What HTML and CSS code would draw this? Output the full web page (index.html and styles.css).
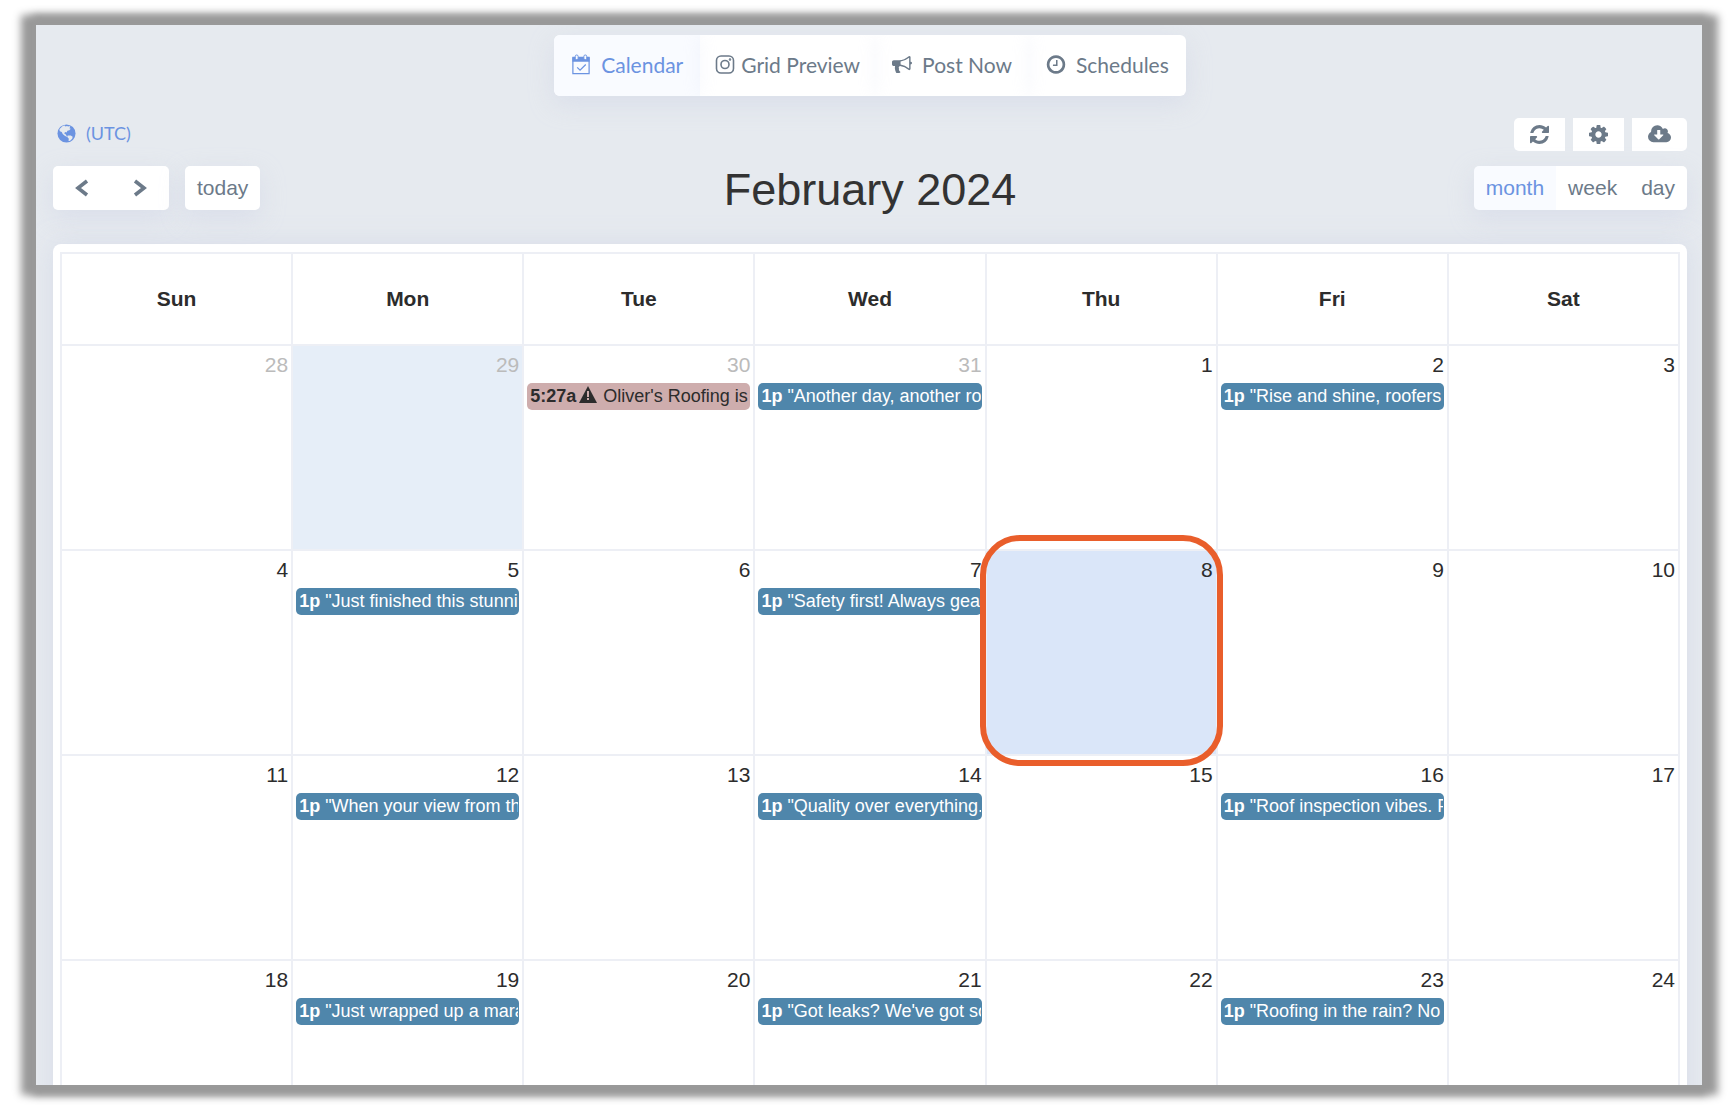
FILE: index.html
```html
<!DOCTYPE html>
<html lang="en">
<head>
  <meta charset="UTF-8">
  <meta name="viewport" content="width=device-width, initial-scale=1.0">
  <title>Calendar</title>
  <link rel="stylesheet" href="styles.css">
</head>
<body>

<main class="frame">
  <nav class="tabs">
    <a href="#calendar" class="tab active">
      <svg class="icon" viewBox="0 0 20 22"><path d="M1.500 4h17v16.500h-17z" fill="none" stroke="currentColor" stroke-width="1.300"/><path d="M1 3h18v5H1z" fill="currentColor"/><rect x="4" y="1" width="3" height="5" rx="1.500" fill="#f9fbff" stroke="currentColor"/><rect x="13" y="1" width="3" height="5" rx="1.500" fill="#f9fbff" stroke="currentColor"/><path d="M6 14l3 3 6-6" fill="none" stroke="currentColor" stroke-width="1.300"/></svg>
      Calendar
    </a>
    <a href="#grid" class="tab tight">
      <svg class="icon" viewBox="0 0 20 20" fill="none" stroke="currentColor" stroke-width="1.600"><rect x="1.500" y="1.500" width="17" height="17" rx="4.500"/><circle cx="10" cy="10" r="4"/><circle cx="15" cy="5" r=".5"/></svg>
      Grid Preview
    </a>
    <a href="#post" class="tab">
      <svg class="icon" viewBox="0 0 1792 1792" fill="currentColor"><path d="M1664 640q53 0 90.500 37.500t37.500 90.500-37.500 90.500-90.500 37.500v384q0 52-38 90t-90 38q-417-347-812-380-58 19-91 66t-31 100.500 40 92.500q-20 33-23 65.500t6 58 33.500 55 48 50 61.500 50.500q-29 58-111.500 83t-168.500 11.500-132-55.500q-7-23-29.500-87.500t-32-94.500-23-89-15-101 3.500-98 22-110.500h-122q-66 0-113-47t-47-113v-192q0-66 47-113t113-47h480q435 0 896-384 52 0 90 38t38 90v384zm-128 604v-954q-394 302-768 343v270q377 42 768 341z"/></svg>
      Post Now
    </a>
    <a href="#schedules" class="tab">
      <svg class="icon" viewBox="64 64 1664 1664" fill="currentColor"><path d="M1024 544v448q0 14-9 23t-23 9h-320q-14 0-23-9t-9-23v-64q0-14 9-23t23-9h224v-352q0-14 9-23t23-9h64q14 0 23 9t9 23zm416 352q0-148-73-273t-198-198-273-73-273 73-198 198-73 273 73 273 198 198 273 73 273-73 198-198 73-273zm224 0q0 209-103 385.500t-279.500 279.500-385.500 103-385.500-103-279.500-279.500-103-385.500 103-385.500 279.500-279.500 385.500-103 385.500 103 279.500 279.500 103 385.500z"/></svg>
      Schedules
    </a>
  </nav>

  <div class="utility">
    <a href="#timezone" class="timezone">
      <svg class="globe" viewBox="0 0 20 20"><circle cx="10" cy="10" r="9.500" fill="currentColor"/><path d="M3 5l3-3 2-.5 1 1 1.500-.5 1.500.5 1-.5 1 1-1 1.500 1.500.5-1.500 1.500-2 .5-1 2-1.500-.5-1 1.500 1.500.5.500 1.500 2 .5-1 1-2-1-2.500-2-1-2-2-1-.5-1.500zM11.500 12l3 0 2 1.500-.5 2-2.500 2.500-1.500-.5.500-2-1.500-1.500z" fill="#e6eaef"/></svg>
      (UTC)
    </a>
    <div class="tools">
      <button type="button" class="tool" aria-label="Refresh"><svg class="tool-icon" viewBox="128 128 1536 1536" fill="currentColor"><path d="M1639 1056q0 5-1 7-64 268-268 434.500t-478 166.500q-146 0-282.500-55t-243.500-157l-129 129q-19 19-45 19t-45-19-19-45v-448q0-26 19-45t45-19h448q26 0 45 19t19 45-19 45l-137 137q71 66 161 102t187 36q134 0 250-65t186-179q11-17 53-117 8-23 30-23h192q13 0 22.500 9.500t9.500 22.500zm25-800v448q0 26-19 45t-45 19h-448q-26 0-45-19t-19-45 19-45l138-138q-148-137-349-137-134 0-250 65t-186 179q-11 17-53 117-8 23-30 23h-199q-13 0-22.500-9.500t-9.500-22.500v-7q65-268 270-434.500t480-166.500q146 0 284 55.500t245 156.500l130-129q19-19 45-19t45 19 19 45z"/></svg></button>
      <button type="button" class="tool" aria-label="Settings"><svg class="tool-icon" viewBox="128 128 1536 1536" fill="currentColor"><path d="M1152 896q0-106-75-181t-181-75-181 75-75 181 75 181 181 75 181-75 75-181zm512-109v222q0 12-8 23t-20 13l-185 28q-19 54-39 91 35 50 107 138 10 12 10 25t-9 23q-27 37-99 108t-94 71q-12 0-26-9l-138-108q-44 23-91 38-16 136-29 186-7 28-36 28h-222q-14 0-24.500-8.500t-11.500-21.500l-28-184q-49-16-90-37l-141 107q-10 9-25 9-14 0-25-11-126-114-165-168-7-10-7-23 0-12 8-23 15-21 51-66.500t54-70.500q-27-50-41-99l-183-27q-13-2-21-12.500t-8-23.500v-222q0-12 8-23t19-13l186-28q14-46 39-92-40-57-107-138-10-12-10-24 0-10 9-23 26-36 98.500-107.500t94.500-71.500q13 0 26 10l138 107q44-23 91-38 16-136 29-186 7-28 36-28h222q14 0 24.500 8.500t11.500 21.500l28 184q49 16 90 37l142-107q9-9 24-9 13 0 25 10 129 119 165 170 7 8 7 22 0 12-8 23-15 21-51 66.500t-54 70.500q26 50 41 98l183 28q13 2 21 12.500t8 23.500z"/></svg></button>
      <button type="button" class="tool" aria-label="Download"><svg class="tool-icon wide" viewBox="-64 256 1920 1280" fill="currentColor"><path d="M1216 928q0-14-9-23t-23-9h-224v-352q0-13-9.500-22.500t-22.500-9.500h-192q-13 0-22.500 9.500t-9.500 22.500v352h-224q-13 0-22.500 9.500t-9.500 22.500q0 14 9 23l352 352q9 9 23 9t23-9l351-351q10-12 10-24zm640 224q0 159-112.500 271.500t-271.500 112.500h-1088q-185 0-316.500-131.500t-131.500-316.500q0-130 70-240t188-165q-2-30-2-43 0-212 150-362t362-150q156 0 285.500 87t188.500 231q71-62 166-62 106 0 181 75t75 181q0 76-41 138 130 31 213.500 135.500t83.500 238.500z"/></svg></button>
    </div>
  </div>

  <div class="toolbar">
    <div class="toolbar-left">
      <div class="group">
        <button type="button" class="btn arrow" aria-label="Previous month"><svg class="chevron" viewBox="0 0 14 18"><path d="M12 2L3 9l9 7" fill="none" stroke="currentColor" stroke-width="3.600"/></svg></button>
        <button type="button" class="btn arrow" aria-label="Next month"><svg class="chevron" viewBox="0 0 14 18"><path d="M2 2l9 7-9 7" fill="none" stroke="currentColor" stroke-width="3.600"/></svg></button>
      </div>
      <div class="group"><button type="button" class="btn">today</button></div>
    </div>
    <h1>February 2024</h1>
    <div class="group views">
      <button type="button" class="btn active">month</button>
      <button type="button" class="btn">week</button>
      <button type="button" class="btn">day</button>
    </div>
  </div>

  <div class="card">
    <table class="month">
      <thead>
        <tr><th>Sun</th><th>Mon</th><th>Tue</th><th>Wed</th><th>Thu</th><th>Fri</th><th>Sat</th></tr>
      </thead>
      <tbody>
        <tr>
          <td class="other"><div class="date">28</div></td>
          <td class="other today"><div class="date">29</div></td>
          <td class="other">
            <div class="date">30</div>
            <a href="#event" class="event failed"><b>5:27a</b><svg class="warning" viewBox="0 0 18 17"><path d="M9 0l9 17H0z" fill="currentColor"/><path d="M9 5v6M9 12v2" stroke="#ceadad" stroke-width="2"/></svg>Oliver's Roofing is</a>
          </td>
          <td class="other"><div class="date">31</div><a href="#event" class="event"><b>1p</b> "Another day, another ro</a></td>
          <td><div class="date">1</div></td>
          <td><div class="date">2</div><a href="#event" class="event"><b>1p</b> "Rise and shine, roofers</a></td>
          <td><div class="date">3</div></td>
        </tr>
        <tr>
          <td><div class="date">4</div></td>
          <td><div class="date">5</div><a href="#event" class="event"><b>1p</b> "Just finished this stunni</a></td>
          <td><div class="date">6</div></td>
          <td><div class="date">7</div><a href="#event" class="event"><b>1p</b> "Safety first! Always gea</a></td>
          <td class="selected"><div class="date">8</div><div class="ring"></div></td>
          <td><div class="date">9</div></td>
          <td><div class="date">10</div></td>
        </tr>
        <tr>
          <td><div class="date">11</div></td>
          <td><div class="date">12</div><a href="#event" class="event"><b>1p</b> "When your view from th</a></td>
          <td><div class="date">13</div></td>
          <td><div class="date">14</div><a href="#event" class="event"><b>1p</b> "Quality over everything.</a></td>
          <td><div class="date">15</div></td>
          <td><div class="date">16</div><a href="#event" class="event"><b>1p</b> "Roof inspection vibes. F</a></td>
          <td><div class="date">17</div></td>
        </tr>
        <tr>
          <td><div class="date">18</div></td>
          <td><div class="date">19</div><a href="#event" class="event"><b>1p</b> "Just wrapped up a mara</a></td>
          <td><div class="date">20</div></td>
          <td><div class="date">21</div><a href="#event" class="event"><b>1p</b> "Got leaks? We've got so</a></td>
          <td><div class="date">22</div></td>
          <td><div class="date">23</div><a href="#event" class="event"><b>1p</b> "Roofing in the rain? No</a></td>
          <td><div class="date">24</div></td>
        </tr>
      </tbody>
    </table>
  </div>
</main>

</body>
</html>
```

FILE: styles.css
```css
* {
  box-sizing: border-box;
}
body {
  margin: 0;
  padding: 25px 34px 35px 36px;
  height: 100vh;
  background: #fff;
  color: #2c2c2c;
  font-family: "Liberation Sans", Arial, sans-serif;
  font-size: 21px;
}
a {
  color: inherit;
  text-decoration: none;
}
button {
  border: 0;
  font: inherit;
  cursor: pointer;
}
.frame {
  height: 100%;
  padding: 10px 15px 0 17px;
  overflow: hidden;
  background: #e6eaef;
  box-shadow: 6px 0 8px 10px #999, -5px 0 8px 10px #999;
}

/* Top navigation */
.tabs {
  display: flex;
  width: fit-content;
  margin: 0 auto 22px;
  border-radius: 6px;
  overflow: hidden;
  background: #fff;
  box-shadow: 0 8px 25px rgba(200, 206, 228, 0.4);
}
.tab {
  display: flex;
  align-items: center;
  gap: 10px;
  height: 61px;
  padding: 0 17px 2px;
  color: #6c7a89;
  font-family: Lato, sans-serif;
  font-size: 21px;
  box-shadow: 0 0 20px rgba(214, 220, 240, 0.2);
}
.tab.active {
  background: #f9fbff;
}
.tab.active,
.btn.active,
.timezone {
  color: #6b93e1;
}
.tab.tight {
  gap: 6px;
  padding: 0 15px 2px;
}
.icon {
  width: 20px;
  height: 21px;
}

/* Time zone and tool buttons */
.utility {
  display: flex;
  justify-content: space-between;
  align-items: center;
  margin-bottom: 15px;
}
.timezone {
  display: flex;
  align-items: center;
  gap: 10px;
  padding: 0 0 3px 4px;
  font-family: Lato, sans-serif;
  font-size: 18px;
}
.globe {
  width: 19px;
  height: 19px;
}
.tools {
  display: flex;
  gap: 8px;
}
.tool {
  display: flex;
  align-items: center;
  height: 33px;
  padding: 0 16px;
  background: #fff;
  color: #6c7a89;
}
.tool:first-child {
  border-radius: 5px 0 0 5px;
}
.tool:last-child {
  border-radius: 0 5px 5px 0;
}
.tool-icon {
  width: 19px;
  height: 19px;
}
.tool-icon.wide {
  width: 23px;
}

/* Calendar toolbar */
.toolbar {
  display: grid;
  grid-template-columns: 1fr auto 1fr;
  align-items: start;
  height: 44px;
  margin-bottom: 34px;
}
.toolbar-left {
  display: flex;
  gap: 16px;
}
.toolbar h1 {
  margin: 0;
  color: #333;
  font-size: 45px;
  font-weight: normal;
  line-height: 48px;
}
.group {
  display: flex;
  border-radius: 5px;
  box-shadow: 0 8px 25px rgba(200, 206, 228, 0.4);
}
.views {
  justify-self: end;
}
.btn {
  height: 44px;
  padding: 0 12px;
  background: #fff;
  color: #6c7a89;
}
.btn:first-child {
  border-top-left-radius: 5px;
  border-bottom-left-radius: 5px;
}
.btn:last-child {
  border-top-right-radius: 5px;
  border-bottom-right-radius: 5px;
}
.btn.active {
  background: #f9fbff;
}
.arrow {
  display: flex;
  align-items: center;
  padding: 0 22px;
}
.chevron {
  width: 14px;
  height: 18px;
}

/* Month table */
.card {
  padding: 8px 7px;
  border-radius: 8px;
  background: #fff;
  box-shadow: 0 0 25px rgba(206, 211, 230, 0.6);
}
.month {
  width: 100%;
  table-layout: fixed;
  border-collapse: collapse;
}
.month th,
.month td {
  border: 2px solid #edeff5;
}
.month th {
  height: 92px;
}
.month td {
  height: 205px;
  padding: 6px 3px 0;
  vertical-align: top;
}
.date {
  margin-bottom: 5px;
  line-height: 26px;
  text-align: right;
}
.other .date {
  color: #bbb;
}
.month .today {
  background: #e6eef8;
}
.month .selected {
  position: relative;
  background: #dae6f9;
}
/* Outline around the picked day, drawn over its neighbours */
.ring {
  position: absolute;
  inset: -16px -7px -12px;
  border: 6px solid #e95e2b;
  border-radius: 40px;
}
.event {
  display: block;
  height: 27px;
  padding: 0 1px 0 3px;
  border-radius: 5px;
  overflow: hidden;
  overflow: clip;
  overflow-clip-margin: content-box;
  background: #4f86ab;
  color: #fff;
  font-size: 18px;
  line-height: 26px;
  white-space: nowrap;
}
.event.failed {
  background: #ceadad;
  color: #2c2c2c;
}
.warning {
  width: 18px;
  height: 17px;
  margin: 0 6px 0 3px;
  vertical-align: -1px;
}
```
